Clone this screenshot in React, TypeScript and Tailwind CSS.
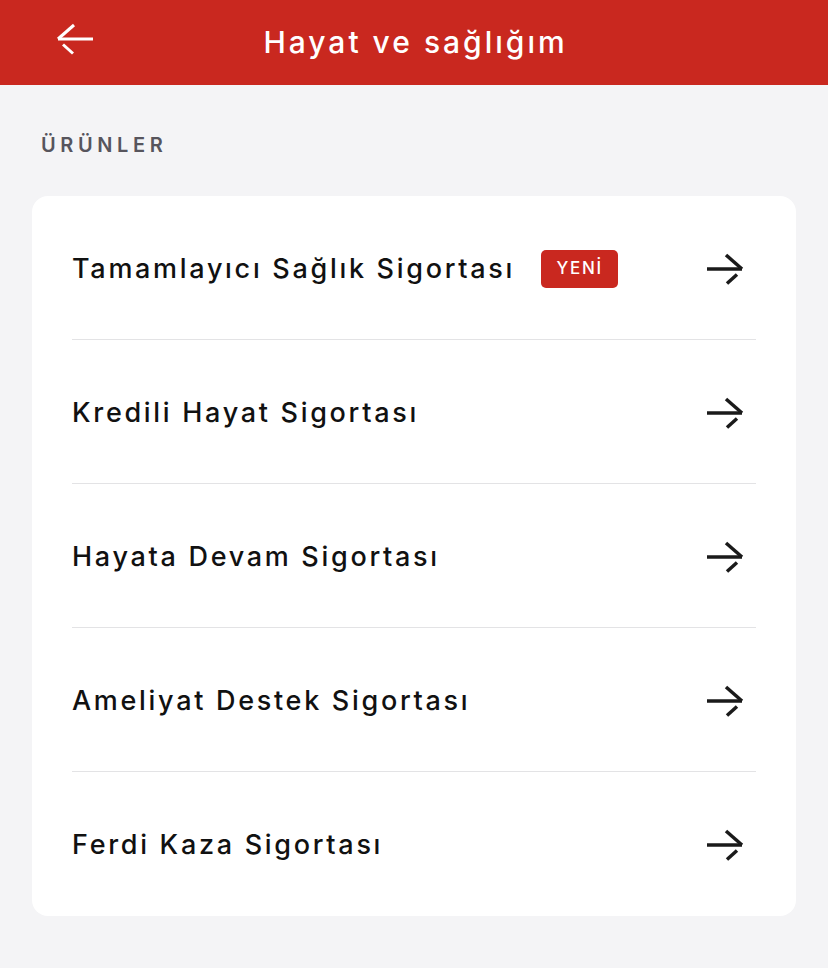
import React from 'react';

const products = [
  { name: 'Tamamlayıcı Sağlık Sigortası', isNew: true },
  { name: 'Kredili Hayat Sigortası' },
  { name: 'Hayata Devam Sigortası' },
  { name: 'Ameliyat Destek Sigortası' },
  { name: 'Ferdi Kaza Sigortası' },
];

function ArrowRight() {
  return (
    <svg width="38" height="32" viewBox="0 0 38 32" fill="none" stroke="#1a1a1a" strokeWidth="3.5" strokeLinecap="butt">
      <path d="M1 16H36" />
      <path d="M20 2L36 16" />
      <path d="M31 21.5L21 30.5" />
    </svg>
  );
}

function ArrowLeft() {
  return (
    <svg width="38" height="32" viewBox="0 0 38 32" fill="none" stroke="#ffffff" strokeWidth="3" strokeLinecap="butt">
      <path d="M2 16H37" />
      <path d="M18 2L2 16" />
      <path d="M7 21.5L17 30.5" />
    </svg>
  );
}

export default function App() {
  return (
    <div className="min-h-[968px] bg-[#f4f4f6] font-['Inter',sans-serif]">
      {/* Header */}
      <header className="relative h-[85px] bg-[#c9281f] flex items-center justify-center">
        <button className="absolute left-[56px] top-[23px]">
          <ArrowLeft />
        </button>
        <h1 className="text-white text-[30px] font-medium tracking-[0.1em] pl-[3px]">Hayat ve sağlığım</h1>
      </header>

      <main className="px-[32px]">
        <h2 className="pt-[47px] pl-[9px] text-[20px] font-semibold tracking-[0.23em] text-[#57555d] leading-[26px]">
          ÜRÜNLER
        </h2>

        {/* Product list */}
        <div className="mt-[38px] bg-white rounded-[16px] pl-[40px] pr-[52px]">
          {products.map((p, i) => (
            <div
              key={p.name}
              className={`flex items-center justify-between h-[144px] ${
                i < products.length - 1 ? 'border-b border-[#e3e3e5] -mr-[12px] pr-[12px]' : ''
              }`}
            >
              <div className="flex items-center gap-[26px] pt-[3px]">
                <span className="text-[27px] font-medium tracking-[0.1em] text-[#111111]">{p.name}</span>
                {p.isNew && (
                  <span className="h-[38px] w-[77px] justify-center rounded-[5px] bg-[#c9281f] text-white text-[17px] font-medium tracking-[0.1em] flex items-center">
                    YENİ
                  </span>
                )}
              </div>
              <div className="pt-[2px]">
                <ArrowRight />
              </div>
            </div>
          ))}
        </div>
      </main>
    </div>
  );
}
